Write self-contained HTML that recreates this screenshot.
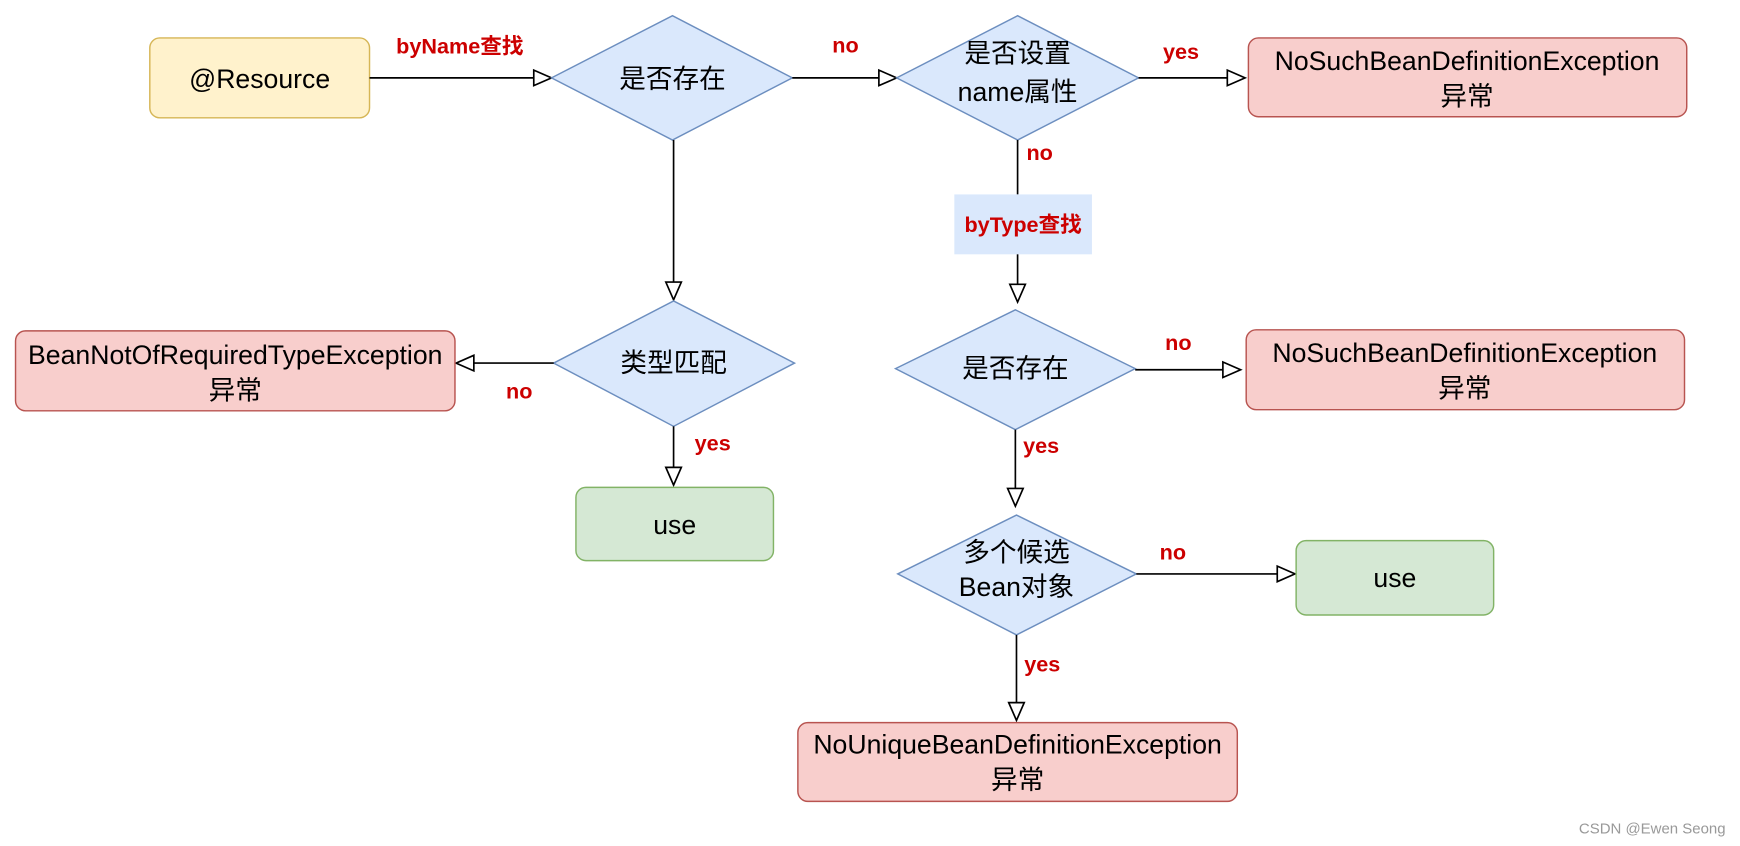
<!DOCTYPE html>
<html><head><meta charset="utf-8"><style>
html,body{margin:0;padding:0;background:#fff;width:1740px;height:846px;overflow:hidden}
svg{display:block}
text{font-family:"Liberation Sans","Noto Sans CJK SC",sans-serif}
.t{font-size:24px;fill:#000;text-anchor:middle}
.l{font-size:19.5px;fill:#cc0000;font-weight:bold}
.ln{stroke:#000;stroke-width:1.5;fill:none}
.ah{fill:#fff;stroke:#000;stroke-width:1.5}
.d{fill:#dae8fc;stroke:#6c8ebf;stroke-width:1.3}
.r{fill:#f8cecc;stroke:#b85450;stroke-width:1.3}
.g{fill:#d5e8d4;stroke:#82b366;stroke-width:1.3}
</style></head><body>
<svg width="1740" height="846" viewBox="0 0 1568 762" xmlns="http://www.w3.org/2000/svg">
<rect x="135" y="34" width="198" height="72" rx="9" fill="#fff2cc" stroke="#d6b656" stroke-width="1.3"/>
<text class="t" x="234" y="79">@Resource</text>
<path class="ln" d="M333 70H481"/><path class="ah" d="M481 63L497 70L481 77Z"/>
<text class="l" x="357" y="48">byName查找</text>
<path class="d" d="M497 70L606 14L714 70L606 126Z"/>
<text class="t" x="606" y="79">是否存在</text>
<path class="ln" d="M714 70H792"/><path class="ah" d="M792 63L808 70L792 77Z"/>
<text class="l" x="750" y="47">no</text>
<path class="d" d="M808 70L917 14L1026 70L917 126Z"/>
<text class="t" x="917" y="56">是否设置</text>
<text class="t" x="917" y="91">name属性</text>
<path class="ln" d="M1026 70H1106"/><path class="ah" d="M1106 63L1122 70L1106 77Z"/>
<text class="l" x="1048" y="53">yes</text>
<rect class="r" x="1125" y="34" width="395" height="71" rx="9"/>
<text class="t" x="1322" y="63">NoSuchBeanDefinitionException</text>
<text class="t" x="1322" y="95">异常</text>
<path class="ln" d="M917 126V175"/>
<text class="l" x="925" y="144">no</text>
<rect x="860" y="175" width="124" height="54" fill="#dae8fc"/>
<text class="l" x="922" y="209" text-anchor="middle">byType查找</text>
<path class="ln" d="M917 229V256"/><path class="ah" d="M910 256L917 272L924 256Z"/>
<path class="d" d="M807 332L915 279L1023 332L915 387Z"/>
<text class="t" x="915" y="340">是否存在</text>
<path class="ln" d="M1023 333H1102"/><path class="ah" d="M1102 326L1118 333L1102 340Z"/>
<text class="l" x="1050" y="315">no</text>
<rect class="r" x="1123" y="297" width="395" height="72" rx="9"/>
<text class="t" x="1320" y="326">NoSuchBeanDefinitionException</text>
<text class="t" x="1320" y="358">异常</text>
<path class="ln" d="M915 387V440"/><path class="ah" d="M908 440L915 456L922 440Z"/>
<text class="l" x="922" y="408">yes</text>
<path class="d" d="M809 517L916 464L1024 517L916 572Z"/>
<text class="t" x="916" y="506">多个候选</text>
<text class="t" x="916" y="537">Bean对象</text>
<path class="ln" d="M1024 517H1151"/><path class="ah" d="M1151 510L1167 517L1151 524Z"/>
<text class="l" x="1045" y="504">no</text>
<rect class="g" x="1168" y="487" width="178" height="67" rx="9"/>
<text class="t" x="1257" y="529">use</text>
<path class="ln" d="M916 572V633"/><path class="ah" d="M909 633L916 649L923 633Z"/>
<text class="l" x="923" y="605">yes</text>
<rect class="r" x="719" y="651" width="396" height="71" rx="9"/>
<text class="t" x="917" y="679">NoUniqueBeanDefinitionException</text>
<text class="t" x="917" y="711">异常</text>
<path class="ln" d="M607 126V254"/><path class="ah" d="M600 254L607 270L614 254Z"/>
<path class="d" d="M499 327L607 271L716 327L607 384Z"/>
<text class="t" x="607" y="335">类型匹配</text>
<path class="ln" d="M499 327H427"/><path class="ah" d="M427 320L411 327L427 334Z"/>
<text class="l" x="456" y="359">no</text>
<rect class="r" x="14" y="298" width="396" height="72" rx="9"/>
<text class="t" x="212" y="328">BeanNotOfRequiredTypeException</text>
<text class="t" x="212" y="360">异常</text>
<path class="ln" d="M607 384V421"/><path class="ah" d="M600 421L607 437L614 421Z"/>
<text class="l" x="626" y="406">yes</text>
<rect class="g" x="519" y="439" width="178" height="66" rx="9"/>
<text class="t" x="608" y="481">use</text>
<text x="1555" y="751" text-anchor="end" style="font-size:13.5px;fill:#999">CSDN @Ewen Seong</text>
</svg>
</body></html>
